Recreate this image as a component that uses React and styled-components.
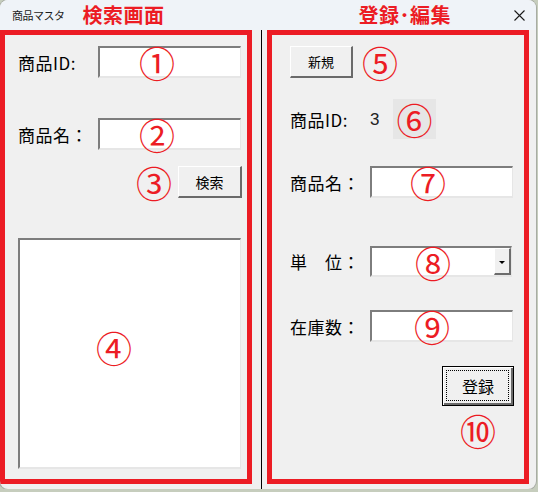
import React from 'react'
import styled, { createGlobalStyle, css } from 'styled-components'

const GlobalStyle = createGlobalStyle`
  html, body {
    margin: 0;
    padding: 0;
    background: #c6cdbd;
  }
  * { box-sizing: border-box; }
`

const JP = `"Noto Sans CJK JP", "Noto Sans", sans-serif`
const RED = '#ec1c24'

const Window = styled.div`
  width: 536px;
  height: 489px;
  background: #f0f0f0;
  border-radius: 8px;
  box-shadow: 0 0 0 1px #a8aca4;
  overflow: hidden;
  font-family: ${JP};
  display: flex;
  flex-direction: column;
`

const TitleBar = styled.div`
  height: 30px;
  flex: none;
  background: #eff3f8;
  display: flex;
  align-items: center;
`

const AppName = styled.span`
  margin-left: 12px;
  font-size: 11px;
  color: #1b1b1b;
  letter-spacing: -0.5px;
`

const Heading = styled.span`
  margin-left: ${p => p.$gap}px;
  font-size: 20px;
  font-weight: 700;
  color: ${RED};
  line-height: 1;
  letter-spacing: 0.5px;
`

const Close = styled.svg`
  margin-left: auto;
  margin-right: 11px;
  width: 11px;
  height: 11px;
`

const Body = styled.div`
  flex: 1;
  display: flex;
`

const Section = styled.div`
  width: ${p => p.$width}px;
  height: 454px;
  border: 5px solid ${RED};
  display: flex;
  flex-direction: column;
  padding: 11px 0 0 ${p => p.$padLeft}px;
`

const Divider = styled.div`
  width: 1px;
  background: #000;
  margin: 0 5px 0 9px;
`

const Row = styled.div`
  display: flex;
  align-items: center;
  height: ${p => p.$height || 32}px;
  margin-top: ${p => p.$top || 0}px;
  justify-content: ${p => p.$justify || 'flex-start'};
  padding-right: ${p => p.$padRight || 0}px;
`

const Label = styled.span`
  width: 80px;
  flex: none;
  font-size: 17px;
  color: #000;
  letter-spacing: 0.5px;
  line-height: 1;
`

const Value = styled.span`
  font-family: "Liberation Sans", sans-serif;
  font-size: 17px;
  color: #222;
  width: 23px;
  margin-top: 2px;
`

const sunken = css`
  background: #fff;
  border-style: solid;
  border-width: 2px 1px 2px 2px;
  border-color: #7d7d7d #e6e6e6 #e6e6e6 #7d7d7d;
`

const TextBox = styled.div`
  ${sunken}
  position: relative;
  width: ${p => p.$width || 143}px;
  height: ${p => p.$height || 32}px;
`

const ListBox = styled.div`
  ${sunken}
  position: relative;
  width: 223px;
  height: 231px;
  margin-top: 40px;
`

const DropButton = styled.div`
  position: absolute;
  right: 0;
  top: 0;
  bottom: 0;
  width: 17px;
  background: #f0f0f0;
  border-style: solid;
  border-width: 1px 2px 2px 1px;
  border-color: #fff #6c6c6c #6c6c6c #fff;
  display: flex;
  align-items: center;
  justify-content: center;

  &::after {
    content: '';
    border-left: 3px solid transparent;
    border-right: 3px solid transparent;
    border-top: 3px solid #000;
    margin-top: 2px;
  }
`

const Button = styled.button`
  width: ${p => p.$width}px;
  height: ${p => p.$height || 32}px;
  margin-left: ${p => p.$left || 0}px;
  padding: 0;
  font-family: ${JP};
  font-size: ${p => p.$size || 13}px;
  color: #000;
  background: #f0f0f0;
  border-style: solid;
  border-width: 1px 2px 2px 1px;
  border-color: #fff #6a6a6a #6a6a6a #fff;
  position: relative;

  ${p => p.$default && css`
    border: 1px solid #000;
    box-shadow: inset 1px 1px 0 #fff, inset -2px -2px 0 #6a6a6a;
    &::after {
      content: '';
      position: absolute;
      inset: 3px 4px 4px 3px;
      border: 1px dotted #000;
    }
  `}
`

const Marker = styled.span`
  display: inline-flex;
  align-items: center;
  justify-content: center;
  height: 30px;
  margin-left: ${p => p.$left || 0}px;
  font-family: ${JP};
  font-size: 36px;
  line-height: 1;
  color: ${RED};
  ${p => p.$over && css`
    position: absolute;
    left: ${p.$x}px;
    top: ${p.$y}px;
    transform: translate(-50%, -50%);
  `}
  ${p => p.$patch && css`
    background: #e6e6e6;
    width: 43px;
    height: 40px;
  `}
`

const Stack = styled.div`
  display: flex;
  flex-direction: column;
  align-items: center;
  margin-left: 152px;
  margin-top: 24px;
  width: 72px;
  gap: 9px;
`

export default function App() {
  return (
    <>
      <GlobalStyle />
      <Window>
        <TitleBar>
          <AppName>商品マスタ</AppName>
          <Heading $gap={18}>検索画面</Heading>
          <Heading $gap={194}>登録･編集</Heading>
          <Close viewBox="0 0 11 11">
            <path d="M0.5 0.5 L10.5 10.5 M10.5 0.5 L0.5 10.5" stroke="#1a1a1a" strokeWidth="1.1" fill="none" />
          </Close>
        </TitleBar>
        <Body>
          <Section $width={252} $padLeft={13}>
            <Row>
              <Label>商品ID:</Label>
              <TextBox>
                <Marker $over $x={57} $y={14}>①</Marker>
              </TextBox>
            </Row>
            <Row $top={40}>
              <Label>商品名：</Label>
              <TextBox>
                <Marker $over $x={57} $y={14}>②</Marker>
              </TextBox>
            </Row>
            <Row $top={16} $justify="flex-end" $padRight={5}>
              <Marker>③</Marker>
              <Button $width={64} $left={6} $size={14}>検索</Button>
            </Row>
            <ListBox>
              <Marker $over $x={94} $y={107}>④</Marker>
            </ListBox>
          </Section>
          <Divider />
          <Section $width={262} $padLeft={18}>
            <Row>
              <Button $width={63}>新規</Button>
              <Marker $left={9}>⑤</Marker>
            </Row>
            <Row $top={21} $height={40}>
              <Label>商品ID:</Label>
              <Value>3</Value>
              <Marker $patch>⑥</Marker>
            </Row>
            <Row $top={27}>
              <Label>商品名：</Label>
              <TextBox>
                <Marker $over $x={56} $y={14}>⑦</Marker>
              </TextBox>
            </Row>
            <Row $top={48} $height={31}>
              <Label>単　位：</Label>
              <TextBox $width={142} $height={31}>
                <Marker $over $x={61} $y={14}>⑧</Marker>
                <DropButton />
              </TextBox>
            </Row>
            <Row $top={33}>
              <Label>在庫数：</Label>
              <TextBox>
                <Marker $over $x={60} $y={14}>⑨</Marker>
              </TextBox>
            </Row>
            <Stack>
              <Button $default $width={72} $height={40} $size={16}>登録</Button>
              <Marker>⑩</Marker>
            </Stack>
          </Section>
        </Body>
      </Window>
    </>
  )
}
